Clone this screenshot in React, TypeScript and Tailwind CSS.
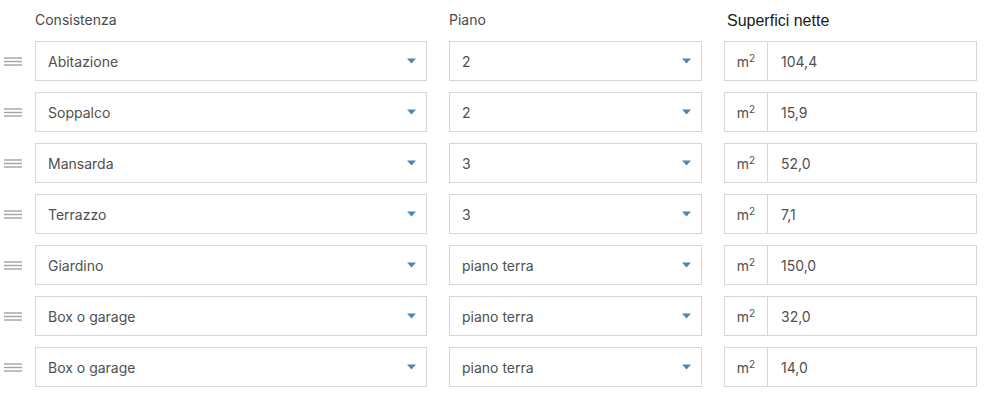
const rows = [
  { tipo: "Abitazione", piano: "2", mq: "104,4" },
  { tipo: "Soppalco", piano: "2", mq: "15,9" },
  { tipo: "Mansarda", piano: "3", mq: "52,0" },
  { tipo: "Terrazzo", piano: "3", mq: "7,1" },
  { tipo: "Giardino", piano: "piano terra", mq: "150,0" },
  { tipo: "Box o garage", piano: "piano terra", mq: "32,0" },
  { tipo: "Box o garage", piano: "piano terra", mq: "14,0" },
]

function Handle() {
  return (
    <svg width="18" height="9" viewBox="0 0 18 9" className="text-[#a3a3a3]">
      <line x1="0" y1="1" x2="18" y2="1" stroke="currentColor" strokeWidth="1.4" />
      <line x1="0" y1="4.5" x2="18" y2="4.5" stroke="currentColor" strokeWidth="1.4" />
      <line x1="0" y1="8" x2="18" y2="8" stroke="currentColor" strokeWidth="1.4" />
    </svg>
  )
}

function Caret() {
  return (
    <svg width="9" height="6" viewBox="0 0 9 6" className="text-[#4a87b4]">
      <path d="M0 0.5 L9 0.5 L4.5 5.5 Z" fill="currentColor" />
    </svg>
  )
}

function Select({ value, width }: { value: string; width: string }) {
  return (
    <div
      className={`flex h-[40px] ${width} items-center justify-between border border-[#d6d6d6] bg-white pl-[12px] pr-[10px] text-[14px] text-[#505050]`}
    >
      <span>{value}</span>
      <Caret />
    </div>
  )
}

export default function App() {
  return (
    <div
      className="h-[404px] w-[990px] bg-white"
      style={{ fontFamily: "Inter, 'Noto Sans', sans-serif" }}
    >
      <div className="flex h-[41px] pt-[10px] text-[14px] leading-[20px] text-[#4a4a4a]">
        <div className="w-[35px]" />
        <div className="w-[392px]">Consistenza</div>
        <div className="ml-[22px] w-[253px]">Piano</div>
        <div
          className="ml-[22px] w-[253px] pl-[3px] pt-[1px] text-[16px] leading-[20px] text-[#1a1a1a]"
          style={{ fontFamily: "'Liberation Sans', Arial, sans-serif" }}
        >
          Superfici nette
        </div>
      </div>
      <div className="flex flex-col gap-[11px]">
        {rows.map((r, i) => (
          <div key={i} className="flex items-center">
            <div className="flex w-[35px] items-center pl-[4px]">
              <Handle />
            </div>
            <Select value={r.tipo} width="w-[392px]" />
            <div className="ml-[22px]">
              <Select value={r.piano} width="w-[253px]" />
            </div>
            <div className="ml-[22px] flex h-[40px] w-[253px] border border-[#d6d6d6] bg-white text-[14px] text-[#505050]">
              <div className="flex w-[43px] items-center justify-center border-r border-[#d6d6d6]">
                <span>
                  m<sup className="text-[10px]">2</sup>
                </span>
              </div>
              <div className="flex items-center pl-[13px]">{r.mq}</div>
            </div>
          </div>
        ))}
      </div>
    </div>
  )
}
